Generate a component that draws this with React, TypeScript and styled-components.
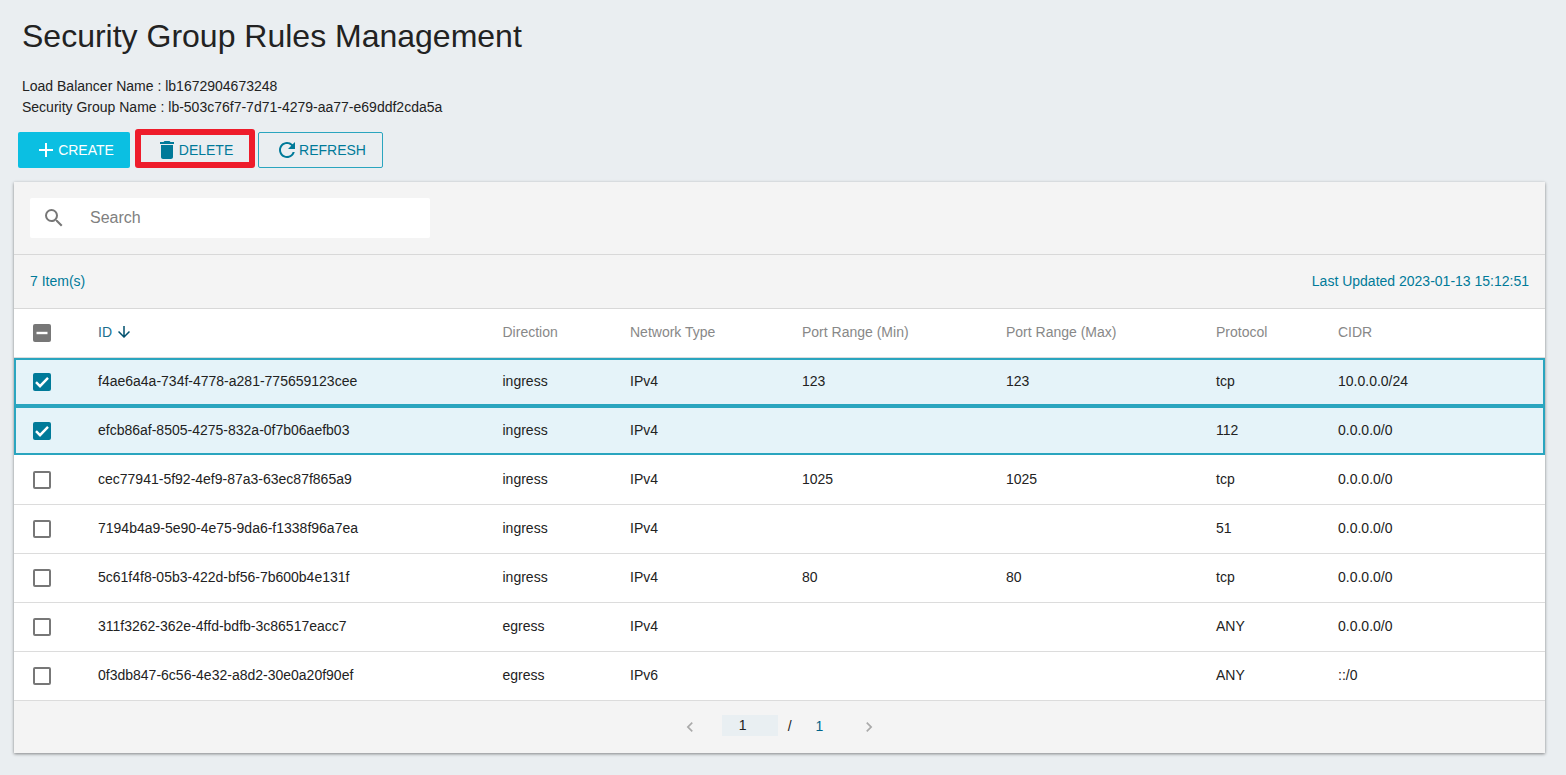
import styled, { createGlobalStyle } from 'styled-components';
import { MdAdd, MdArrowDownward, MdChevronLeft, MdChevronRight, MdDelete, MdRefresh, MdSearch } from 'react-icons/md';

type TRule = {
  id: string;
  direction: string;
  network: string;
  min: string;
  max: string;
  protocol: string;
  cidr: string;
  selected?: boolean;
};

const RULES: Array<TRule> = [
  { id: 'f4ae6a4a-734f-4778-a281-775659123cee', direction: 'ingress', network: 'IPv4', min: '123', max: '123', protocol: 'tcp', cidr: '10.0.0.0/24', selected: true },
  { id: 'efcb86af-8505-4275-832a-0f7b06aefb03', direction: 'ingress', network: 'IPv4', min: '', max: '', protocol: '112', cidr: '0.0.0.0/0', selected: true },
  { id: 'cec77941-5f92-4ef9-87a3-63ec87f865a9', direction: 'ingress', network: 'IPv4', min: '1025', max: '1025', protocol: 'tcp', cidr: '0.0.0.0/0' },
  { id: '7194b4a9-5e90-4e75-9da6-f1338f96a7ea', direction: 'ingress', network: 'IPv4', min: '', max: '', protocol: '51', cidr: '0.0.0.0/0' },
  { id: '5c61f4f8-05b3-422d-bf56-7b600b4e131f', direction: 'ingress', network: 'IPv4', min: '80', max: '80', protocol: 'tcp', cidr: '0.0.0.0/0' },
  { id: '311f3262-362e-4ffd-bdfb-3c86517eacc7', direction: 'egress', network: 'IPv4', min: '', max: '', protocol: 'ANY', cidr: '0.0.0.0/0' },
  { id: '0f3db847-6c56-4e32-a8d2-30e0a20f90ef', direction: 'egress', network: 'IPv6', min: '', max: '', protocol: 'ANY', cidr: '::/0' },
];

const GlobalStyle = createGlobalStyle`
  html, body {
    margin: 0;
    padding: 0;
    height: 100%;
    background: #eaeef1;
    font-family: "Liberation Sans", Arial, sans-serif;
    color: #222;
    overflow: hidden;
  }
`;

const Page = styled.main`
  display: flex;
  flex-direction: column;
  padding: 0 21px 0 14px;
`;
const Title = styled.h1`
  margin: 17px 0 0 8px;
  font-size: 32px;
  line-height: 38px;
  font-weight: 400;
  color: #222;
`;
const Info = styled.div`
  margin: 21px 0 0 8px;
  font-size: 14px;
  line-height: 21px;
  color: #222;
`;
const Toolbar = styled.div`
  display: flex;
  align-items: flex-end;
  height: 36px;
  margin: 14px 0 14px 4px;
`;
const Highlight = styled.div`
  display: flex;
  border: 6px solid #ee1c2b;
  border-radius: 3px;
  margin: 0 3px 0 5px;
`;
const Button = styled.button<{ $primary?: boolean; $width: number }>`
  display: flex;
  align-items: center;
  justify-content: center;
  box-sizing: border-box;
  width: ${({ $width }) => $width}px;
  height: 36px;
  padding: 0;
  font-family: inherit;
  font-size: 14px;
  border-radius: 2px;
  border: ${({ $primary }) => ($primary ? '0' : '1px solid #2aa5bf')};
  background: ${({ $primary }) => ($primary ? '#0bbfe2' : 'transparent')};
  color: ${({ $primary }) => ($primary ? '#fff' : '#007a99')};
  svg {
    flex: none;
  }
`;
const FramedButton = styled(Button)`
  height: 27px;
  border: 0;
  padding: 3px 2px 0 0;
`;
const Panel = styled.section`
  display: flex;
  flex-direction: column;
  background: #f4f4f4;
  box-shadow: 0 1px 3px rgba(0, 0, 0, 0.45);
`;
const SearchBar = styled.div`
  display: flex;
  height: 73px;
  box-sizing: border-box;
  padding: 16px;
  border-bottom: 1px solid #d8d8d8;
`;
const SearchBox = styled.label`
  display: flex;
  align-items: center;
  width: 400px;
  height: 40px;
  box-sizing: border-box;
  padding-left: 12px;
  gap: 24px;
  background: #fff;
  border-radius: 2px;
  color: #777;
  font-size: 16px;
`;
const SearchInput = styled.input`
  border: 0;
  outline: 0;
  flex: 1;
  min-width: 0;
  padding: 0;
  font-family: inherit;
  font-size: 16px;
  color: #222;
  &::placeholder {
    color: #808080;
    opacity: 1;
  }
`;
const Summary = styled.div`
  display: flex;
  align-items: center;
  justify-content: space-between;
  height: 54px;
  padding: 0 16px 2px;
  font-size: 14px;
  color: #007a99;
  border-bottom: 1px solid #d8d8d8;
  box-sizing: border-box;
`;
const Row = styled.div<{ $head?: boolean }>`
  display: grid;
  grid-template-columns: 84px 404.5px 127.5px 172px 204px 210px 122px 1fr;
  align-items: center;
  box-sizing: border-box;
  height: 49px;
  font-size: 14px;
  color: ${({ $head }) => ($head ? '#888' : '#222')};
  background: #fff;
  border-bottom: 1px solid #dcdcdc;
`;
const SelectedRow = styled(Row)`
  height: 48px;
  padding-bottom: 1px;
  background: #e5f3f9;
  border-bottom: 0;
  box-shadow: inset 0 0 0 2px #2aa5bf;
  & + & {
    height: 49px;
    padding: 1px 0;
  }
`;
const BodyRow = styled(Row)`
  ${SelectedRow} + & {
    height: 50px;
    padding-top: 1px;
  }
`;
const Cell = styled.span`
  padding-bottom: 2px;
`;
const CheckCell = styled.div`
  display: flex;
  padding-left: 19px;
`;
const SortLabel = styled(Cell)`
  display: flex;
  align-items: center;
  gap: 3px;
  color: #1b6f8e;
  svg {
    color: #00506e;
  }
`;
const Box = styled.span<{ $fill?: string }>`
  display: flex;
  align-items: center;
  justify-content: center;
  box-sizing: border-box;
  width: 18px;
  height: 18px;
  border-radius: 2px;
  background: ${({ $fill }) => $fill ?? '#fff'};
  border: ${({ $fill }) => ($fill ? '0' : '2px solid #777')};
`;
const Pager = styled.footer`
  display: flex;
  align-items: center;
  justify-content: center;
  box-sizing: border-box;
  height: 52px;
  padding-bottom: 3px;
  font-size: 14px;
  color: #222;
`;
const PagerArrow = styled.span`
  display: flex;
  color: #aaa;
  margin-top: 3px;
`;
const PageInput = styled.span`
  box-sizing: border-box;
  width: 56px;
  height: 21px;
  line-height: 20px;
  padding-left: 17px;
  margin: 0 10px 0 22px;
  background: #e9eff2;
`;
const PageTotal = styled.span`
  margin: 0 36px 0 24px;
  color: #00648a;
`;

const Check = ({ checked }: { checked: boolean }) =>
  checked ? (
    <Box $fill="#007a99">
      <svg width="18" height="18" viewBox="0 0 18 18" fill="none" stroke="#fff" strokeWidth="2.4">
        <path d="M3 9.2l4 4 8-8.4" />
      </svg>
    </Box>
  ) : (
    <Box />
  );

const App = () => (
  <>
    <GlobalStyle />
    <Page>
      <Title>Security Group Rules Management</Title>
      <Info>
        Load Balancer Name : lb1672904673248
        <br />
        Security Group Name : lb-503c76f7-7d71-4279-aa77-e69ddf2cda5a
      </Info>
      <Toolbar>
        <Button $primary $width={112}>
          <MdAdd size={24} />
          CREATE
        </Button>
        <Highlight>
          <FramedButton $width={108}>
            <MdDelete size={24} />
            DELETE
          </FramedButton>
        </Highlight>
        <Button $width={125}>
          <MdRefresh size={24} />
          REFRESH
        </Button>
      </Toolbar>
      <Panel>
        <SearchBar>
          <SearchBox>
            <MdSearch size={24} />
            <SearchInput placeholder="Search" />
          </SearchBox>
        </SearchBar>
        <Summary>
          <span>7 Item(s)</span>
          <span>Last Updated 2023-01-13 15:12:51</span>
        </Summary>
        <Row $head>
          <CheckCell>
            <Box $fill="#777">
              <svg width="18" height="18" viewBox="0 0 18 18" fill="none" stroke="#fff" strokeWidth="2.4">
                <path d="M3.5 9h11" />
              </svg>
            </Box>
          </CheckCell>
          <SortLabel>
            ID <MdArrowDownward size={18} />
          </SortLabel>
          <Cell>Direction</Cell>
          <Cell>Network Type</Cell>
          <Cell>Port Range (Min)</Cell>
          <Cell>Port Range (Max)</Cell>
          <Cell>Protocol</Cell>
          <Cell>CIDR</Cell>
        </Row>
        {RULES.map((rule) => {
          const RuleRow = rule.selected ? SelectedRow : BodyRow;
          return (
            <RuleRow key={rule.id}>
              <CheckCell>
                <Check checked={!!rule.selected} />
              </CheckCell>
              <Cell>{rule.id}</Cell>
              <Cell>{rule.direction}</Cell>
              <Cell>{rule.network}</Cell>
              <Cell>{rule.min}</Cell>
              <Cell>{rule.max}</Cell>
              <Cell>{rule.protocol}</Cell>
              <Cell>{rule.cidr}</Cell>
            </RuleRow>
          );
        })}
        <Pager>
          <PagerArrow>
            <MdChevronLeft size={20} />
          </PagerArrow>
          <PageInput>1</PageInput>/<PageTotal>1</PageTotal>
          <PagerArrow>
            <MdChevronRight size={20} />
          </PagerArrow>
        </Pager>
      </Panel>
    </Page>
  </>
);

export default App;
